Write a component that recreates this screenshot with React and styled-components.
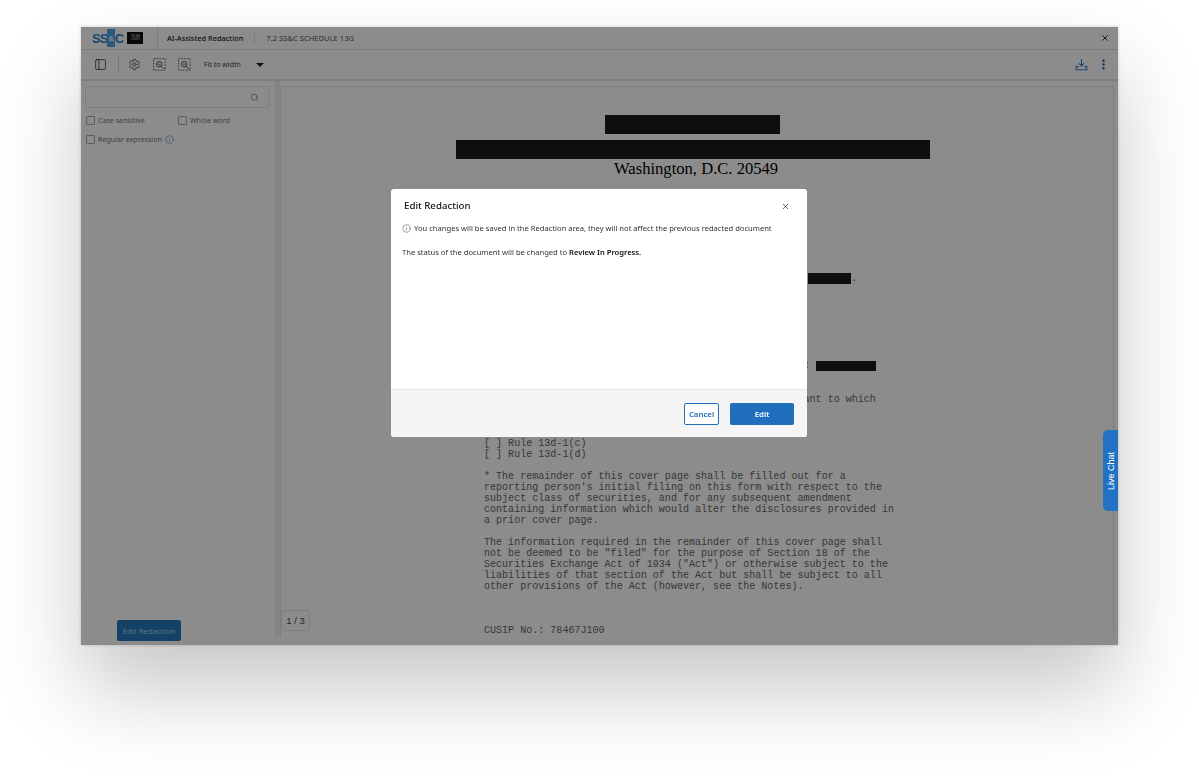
import React from 'react';
import styled, { createGlobalStyle } from 'styled-components';
import { PanelLeft, Settings, Search, Info, X, MoreVertical } from 'lucide-react';

const GlobalStyle = createGlobalStyle`
  html, body { margin: 0; padding: 0; background: #fff; }
  body { font-family: "Noto Sans", "Liberation Sans", sans-serif; }
`;

const DashedZoom = () => (
  <svg width="13" height="13" viewBox="0 0 13 13" fill="none" stroke="#333" strokeWidth="0.8">
    <rect x="0.6" y="0.6" width="11.6" height="11.6" strokeDasharray="1.6 1.3" />
    <circle cx="6.2" cy="6.2" r="2.7" />
    <path d="M8.2 8.2 L10.8 10.8" />
    <path d="M4.9 6.2 H7.5" />
  </svg>
);

const DownloadIcon = () => (
  <svg width="13" height="13" viewBox="0 0 13 13" fill="none" stroke="#2b7cc4" strokeWidth="1.1">
    <path d="M6.5 1 V7.6" />
    <path d="M4 5.4 L6.5 8 L9 5.4" />
    <path d="M3.6 8.6 H1.2 V11.8 H11.8 V8.6 H9.4" />
  </svg>
);

const Page = styled.div`
  width: 1199px;
  height: 780px;
  padding: 27px 81px 0;
  box-sizing: border-box;
  overflow: hidden;
`;

const AppWindow = styled.div`
  position: relative;
  width: 1037px;
  height: 618px;
  background: #fff;
  box-shadow: 0 45px 80px rgba(0, 0, 0, 0.22), 0 0 3px rgba(0, 0, 0, 0.2);
  display: flex;
  flex-direction: column;
  overflow: hidden;
`;

const TitleBar = styled.header`
  height: 22px;
  display: flex;
  align-items: center;
  border-bottom: 1px solid #e2e2e2;
  color: #222;
`;

const LogoBox = styled.div`
  width: 65px;
  padding-left: 11px;
  display: flex;
  align-items: center;
  gap: 4px;
  height: 100%;
  border-right: 1px solid #e2e2e2;
  margin-right: 9px;
`;

const Logo = styled.div`
  font-family: "Liberation Sans", sans-serif;
  font-weight: 700;
  font-size: 13px;
  letter-spacing: -0.8px;
  color: #2f83c8;
  display: flex;
  align-items: center;
`;

const LogoAmp = styled.span`
  background: #4da6e6;
  color: #e8f4ff;
  font-size: 8px;
  height: 18px;
  line-height: 20px;
  width: 8px;
  text-align: center;
  letter-spacing: 0;
  margin: 0 -0.5px;
`;

const IntraBadge = styled.div`
  width: 16px;
  height: 12px;
  background: #111;
  color: #ccc;
  font-size: 3px;
  line-height: 3.4px;
  text-align: center;
  padding-top: 3px;
  box-sizing: border-box;
  font-family: "Liberation Sans", sans-serif;
`;

const AppTitle = styled.span`
  font-size: 7.4px;
  font-weight: 500;
  color: #1d1d1d;
  padding-right: 11px;
  border-right: 1px solid #e2e2e2;
  margin-right: 11px;
  line-height: 12px;
`;

const DocName = styled.span`
  font-size: 7.6px;
  color: #555;
`;

const CloseButton = styled.button`
  margin-left: auto;
  margin-right: 8px;
  padding: 0;
  background: none;
  border: 0;
  display: flex;
  color: #111;
`;

const Toolbar = styled.div`
  height: 29px;
  display: flex;
  align-items: center;
  border-bottom: 2px solid #e6e6e6;
  padding: 0 8px 0 13px;
`;

const ToolSep = styled.span`
  width: 1px;
  height: 15px;
  background: #ddd;
  margin: 0 9px 0 11px;
`;

const ToolIcon = styled.span`
  display: flex;
  margin-right: 12px;
  color: #222;
`;

const ZoomLabel = styled.span`
  font-size: 7px;
  color: #444;
  margin: 0 15px 0 1px;
`;

const Caret = styled.span`
  width: 0;
  height: 0;
  border-left: 4px solid transparent;
  border-right: 4px solid transparent;
  border-top: 4px solid #222;
`;

const ToolRight = styled.div`
  margin-left: auto;
  display: flex;
  align-items: center;
  gap: 9px;
  color: #0f5fa8;
`;

const Workspace = styled.div`
  flex: 1;
  min-height: 0;
  display: flex;
`;

const Sidebar = styled.aside`
  width: 194px;
  box-sizing: border-box;
  padding: 5px 6px 3px 4px;
  display: flex;
  flex-direction: column;
`;

const SearchBox = styled.div`
  height: 20px;
  border: 1px solid #e8e8e8;
  border-radius: 2px;
  display: flex;
  align-items: center;
  justify-content: flex-end;
  padding-right: 9px;
  color: #666;
  margin-bottom: 7px;
`;

const OptionRow = styled.div`
  display: flex;
  align-items: center;
  height: 10px;
  margin-bottom: 9px;
  padding-left: 1px;
`;

const Option = styled.label`
  display: flex;
  align-items: center;
  gap: 3px;
  font-size: 7.1px;
  color: #777;
  width: ${(p) => p.$width || 'auto'};
`;

const Box = styled.span`
  width: 7px;
  height: 7px;
  border: 1px solid #aaa;
  border-radius: 1px;
`;

const InfoMark = styled.span`
  display: flex;
  color: #2b7cc4;
  margin-left: 3px;
`;

const EditRedactionButton = styled.button`
  margin: auto 0 1px 32px;
  align-self: flex-start;
  width: 64px;
  height: 21px;
  padding: 0;
  background: #2577b8;
  border: 0;
  border-radius: 2px;
  color: #a6d4f2;
  font-family: inherit;
  font-size: 7.8px;
`;

const Divider = styled.div`
  width: 5px;
  background: #f0f0f0;
  margin-bottom: 8px;
`;

const DocArea = styled.main`
  flex: 1;
  position: relative;
  overflow: hidden;
  border-left: 1px solid #e8e8e8;
  border-right: 1px solid #e8e8e8;
  margin: 5px 4px 8px 0;
  border-top: 1px solid #e8e8e8;
`;

const Paper = styled.div`
  display: flex;
  flex-direction: column;
  padding-top: 28px;
`;

const RedactBar = styled.div`
  background: #1a1a1a;
  height: ${(p) => p.$h}px;
  width: ${(p) => p.$w}px;
  margin-top: ${(p) => p.$top || 0}px;
  margin-left: ${(p) => p.$left}px;
`;

const Heading = styled.div`
  font-family: "Liberation Serif", serif;
  font-size: 16.6px;
  line-height: 20px;
  color: #000;
  margin-left: 333px;
`;

const RedactLine = styled.div`
  display: flex;
  align-items: flex-end;
  margin-top: ${(p) => p.$top}px;
  margin-left: ${(p) => p.$left}px;
  font-family: "Liberation Mono", monospace;
  font-size: 10px;
  line-height: 11px;
  color: #666;
`;

const MonoBlock = styled.pre`
  margin: ${(p) => p.$top || 0}px 0 0 203px;
  font-family: "Liberation Mono", monospace;
  font-size: 10.06px;
  line-height: 11px;
  color: #666;
`;

const PageBadge = styled.div`
  position: absolute;
  left: 0;
  bottom: 6px;
  width: 29px;
  height: 21px;
  border: 1px solid #e4e4e4;
  border-radius: 4px;
  background: #fff;
  box-sizing: border-box;
  font-family: "Liberation Sans", sans-serif;
  font-size: 9.5px;
  color: #444;
  display: flex;
  align-items: center;
  justify-content: center;
`;

const Overlay = styled.div`
  position: absolute;
  inset: 0;
  background: rgba(0, 0, 0, 0.45);
`;

const Modal = styled.section`
  position: absolute;
  left: 310px;
  top: 162px;
  width: 416px;
  height: 248px;
  background: #fff;
  border-radius: 3px;
  display: flex;
  flex-direction: column;
  overflow: hidden;
  will-change: transform;
`;

const ModalHeader = styled.div`
  display: flex;
  align-items: center;
  justify-content: space-between;
  padding: 8px 18px 0 13px;
  height: 24px;
  box-sizing: border-box;
  font-size: 9.7px;
  font-weight: 500;
  color: #111;
`;

const ModalClose = styled.span`
  display: flex;
  margin: 3px -1px 0 0;
  color: #222;
`;

const ModalBody = styled.div`
  flex: 1;
  padding: 9px 11px 0;
  font-size: 7.6px;
  line-height: 12px;
  color: #333;
`;

const Notice = styled.p`
  margin: 0 0 12px;
  display: flex;
  align-items: center;
  gap: 3px;
`;

const Status = styled.p`
  margin: 0;
  b { font-weight: 600; color: #111; }
`;

const ModalFooter = styled.div`
  height: 48px;
  box-sizing: border-box;
  background: #f5f5f5;
  border-top: 1px solid #e6e6e6;
  display: flex;
  align-items: center;
  justify-content: flex-end;
  gap: 11px;
  padding: 0 13px 0 0;
`;

const CancelButton = styled.button`
  width: 35px;
  height: 22px;
  padding: 0;
  background: #fff;
  border: 1px solid #1f6fbd;
  border-radius: 2px;
  color: #1f6fbd;
  font-family: inherit;
  font-size: 7.8px;
  font-weight: 600;
`;

const PrimaryButton = styled.button`
  width: 64px;
  height: 22px;
  padding: 0;
  background: #1f6fbd;
  border: 0;
  border-radius: 2px;
  color: #fff;
  font-family: inherit;
  font-size: 7.8px;
  font-weight: 600;
`;

const LiveChat = styled.div`
  position: absolute;
  right: 0;
  top: 403px;
  width: 15px;
  height: 81px;
  background: #2272c3;
  color: #fff;
  font-family: "Liberation Sans", sans-serif;
  font-size: 9px;
  writing-mode: vertical-rl;
  transform: rotate(180deg);
  border-radius: 0 5px 5px 0;
  display: flex;
  align-items: center;
  justify-content: center;
`;

export default function App() {
  return (
    <>
      <GlobalStyle />
      <Page>
        <AppWindow>
          <TitleBar>
            <LogoBox>
              <Logo>SS<LogoAmp>&amp;</LogoAmp>C</Logo>
              <IntraBadge>INTRA<br />LINKS</IntraBadge>
            </LogoBox>
            <AppTitle>AI-Assisted Redaction</AppTitle>
            <DocName>7.2 SS&amp;C SCHEDULE 13G</DocName>
            <CloseButton><X size={10} strokeWidth={2} /></CloseButton>
          </TitleBar>
          <Toolbar>
            <PanelLeft size={13} strokeWidth={1.4} color="#2c2c2c" />
            <ToolSep />
            <ToolIcon><Settings size={13} strokeWidth={1.2} /></ToolIcon>
            <ToolIcon><DashedZoom /></ToolIcon>
            <ToolIcon><DashedZoom /></ToolIcon>
            <ZoomLabel>Fit to width</ZoomLabel>
            <Caret />
            <ToolRight>
              <DownloadIcon />
              <MoreVertical size={13} strokeWidth={2.4} />
            </ToolRight>
          </Toolbar>
          <Workspace>
            <Sidebar>
              <SearchBox><Search size={9} strokeWidth={1.5} /></SearchBox>
              <OptionRow>
                <Option $width="92px"><Box />Case sensitive</Option>
                <Option><Box />Whole word</Option>
              </OptionRow>
              <OptionRow>
                <Option><Box />Regular expression</Option>
                <InfoMark><Info size={9} strokeWidth={1.4} /></InfoMark>
              </OptionRow>
              <EditRedactionButton>Edit Redaction</EditRedactionButton>
            </Sidebar>
            <Divider />
            <DocArea>
              <Paper>
                <RedactBar $w={175} $h={19} $left={324} />
                <RedactBar $w={474} $h={19} $top={6} $left={175} />
                <Heading>Washington, D.C. 20549</Heading>
                <RedactLine $top={94} $left={527}>
                  <RedactBar $w={43} $h={11} $left={0} />.
                </RedactLine>
                <RedactLine $top={76} $left={523}>
                  :<RedactBar $w={60} $h={10} $left={6} />
                </RedactLine>
                <MonoBlock $top={23}>{`Check the appropriate box to designate the rule pursuant to which
this Schedule is filed:

[ ] Rule 13d-1(b)
[ ] Rule 13d-1(c)
[ ] Rule 13d-1(d)

* The remainder of this cover page shall be filled out for a
reporting person's initial filing on this form with respect to the
subject class of securities, and for any subsequent amendment
containing information which would alter the disclosures provided in
a prior cover page.

The information required in the remainder of this cover page shall
not be deemed to be "filed" for the purpose of Section 18 of the
Securities Exchange Act of 1934 ("Act") or otherwise subject to the
liabilities of that section of the Act but shall be subject to all
other provisions of the Act (however, see the Notes).



CUSIP No.: 78467J100`}</MonoBlock>
              </Paper>
              <PageBadge>1 / 3</PageBadge>
            </DocArea>
          </Workspace>
          <Overlay />
          <Modal>
            <ModalHeader>
              Edit Redaction
              <ModalClose><X size={9} strokeWidth={1.8} /></ModalClose>
            </ModalHeader>
            <ModalBody>
              <Notice>
                <Info size={9} strokeWidth={1.2} />
                You changes will be saved in the Redaction area, they will not affect the previous redacted document
              </Notice>
              <Status>The status of the document will be changed to <b>Review In Progress.</b></Status>
            </ModalBody>
            <ModalFooter>
              <CancelButton>Cancel</CancelButton>
              <PrimaryButton>Edit</PrimaryButton>
            </ModalFooter>
          </Modal>
          <LiveChat>Live Chat</LiveChat>
        </AppWindow>
      </Page>
    </>
  );
}
